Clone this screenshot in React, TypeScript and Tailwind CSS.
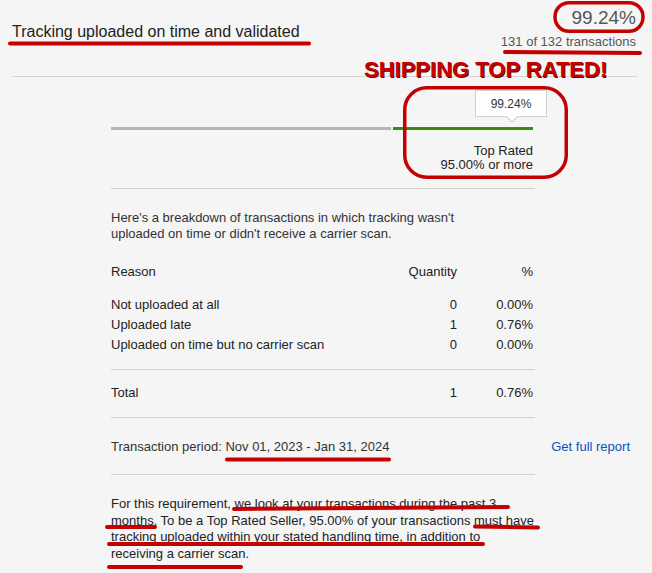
const red = '#c50000';

function Rule({ className = '' }: { className?: string }) {
  return <div className={`h-px bg-[#d4d4d4] ${className}`} />;
}

const rows = [
  { reason: 'Not uploaded at all', qty: 0, pct: '0.00%' },
  { reason: 'Uploaded late', qty: 1, pct: '0.76%' },
  { reason: 'Uploaded on time but no carrier scan', qty: 0, pct: '0.00%' },
];

// Red marker annotations drawn over the page
function Annotations() {
  return (
    <svg
      className="absolute inset-0 pointer-events-none"
      width={652}
      height={573}
      viewBox="0 0 652 573"
      fill="none"
      stroke={red}
      strokeWidth={4}
      strokeLinecap="round"
    >
      <line x1={10} y1={43.5} x2={309} y2={43.5} />
      <line x1={505} y1={52} x2={640} y2={53} />
      <rect x={555} y={2.75} width={88} height={28.5} rx={14} strokeWidth={3.5} />
      <rect x={404.75} y={87.75} width={161.5} height={89.5} rx={22} strokeWidth={3.5} />
      <line x1={227} y1={459.5} x2={389} y2={459.5} />
      <line x1={234} y1={509} x2={508} y2={507} />
      <line x1={107} y1={527} x2={155} y2={527} />
      <line x1={475} y1={526.5} x2={538} y2={527.5} />
      <line x1={109} y1={544} x2={483} y2={544} />
      <line x1={109} y1={567} x2={241} y2={567} />
    </svg>
  );
}

export default function App() {
  return (
    <div className="relative w-[652px] h-[573px] overflow-hidden bg-[#f5f5f5] text-[#333] font-['Liberation_Sans',Arial,sans-serif]">
      {/* Header */}
      <div className="flex justify-between pl-3 pr-4">
        <h1 className="pt-[22px] text-[16px] leading-[20px] text-[#222] font-normal">
          Tracking uploaded on time and validated
        </h1>
        <div className="flex flex-col items-end pt-[7px]">
          <div className="text-[19px] leading-[22px] text-[#555]">99.24%</div>
          <div className="mt-[5px] text-[13px] leading-[16px] text-[#555]">131 of 132 transactions</div>
        </div>
      </div>
      <Rule className="mt-[26px] ml-3 w-[625px] bg-[#d0d0d0]" />

      {/* Content column */}
      <div className="ml-[111px] w-[424px] text-[13px]">
        {/* Gauge */}
        <div className="pt-[13px]">
          <div className="flex justify-end mr-[-12px]">
            <div className="relative w-[72px] h-[27px] bg-white border border-[#cfcfcf] flex items-center justify-center text-[12px] text-[#333]">
              99.24%
              <span className="absolute left-[32px] bottom-[-5px] w-[8px] h-[8px] rotate-45 bg-white border-r border-b border-[#cfcfcf]" />
            </div>
          </div>
          <div className="flex gap-[2px] mt-[10px]">
            <div className="w-[280px] h-[3px] bg-[#b5b5b5]" />
            <div className="w-[140px] h-[3px] bg-[#3f8a10]" />
          </div>
          <div className="mt-[14px] pr-[2px] text-right leading-[14px] text-[#222]">
            <div>Top Rated</div>
            <div>95.00% or more</div>
          </div>
        </div>
        <Rule className="mt-[16px]" />

        {/* Breakdown */}
        <p className="mt-[21px] leading-[16px] w-[360px]">
          Here's a breakdown of transactions in which tracking wasn't uploaded on time or didn't receive a carrier scan.
        </p>

        <div className="mt-[20px] pr-[2px] grid grid-cols-[1fr_auto_76px] leading-[20px] text-[#222]">
          <div>Reason</div>
          <div className="text-right">Quantity</div>
          <div className="text-right">%</div>
        </div>
        <div className="mt-[12.5px] pr-[2px] grid grid-cols-[1fr_auto_76px] leading-[20px] text-[#222]">
          {rows.map((r) => (
            <div key={r.reason} className="contents">
              <div>{r.reason}</div>
              <div className="text-right">{r.qty}</div>
              <div className="text-right">{r.pct}</div>
            </div>
          ))}
        </div>
        <Rule className="mt-[14.5px]" />
        <div className="mt-[12.5px] pr-[2px] grid grid-cols-[1fr_auto_76px] leading-[20px] text-[#222]">
          <div>Total</div>
          <div className="text-right">1</div>
          <div className="text-right">0.76%</div>
        </div>
        <Rule className="mt-[14.5px]" />

        <div className="mt-[20.5px] w-[519px] flex justify-between leading-[16px]">
          <span>Transaction period: Nov 01, 2023 - Jan 31, 2024</span>
          <a className="text-[#0654ba]" href="#">Get full report</a>
        </div>
        <Rule className="mt-[19.5px]" />

        <p className="mt-[21px] w-[423px] leading-[16.5px] text-[#222]">
          For this requirement, we look at your transactions during the past 3 months. To be a Top Rated Seller, 95.00% of your transactions must have tracking uploaded within your stated handling time, in addition to receiving a carrier scan.
        </p>
      </div>

      {/* Annotation label */}
      <div
        className="absolute left-[364px] top-[59px] text-[22px] leading-[22px] font-bold text-[#c80000] [text-shadow:1px_1px_0_#5a0000]"
      >
        SHIPPING TOP RATED!
      </div>
      <Annotations />
    </div>
  );
}
